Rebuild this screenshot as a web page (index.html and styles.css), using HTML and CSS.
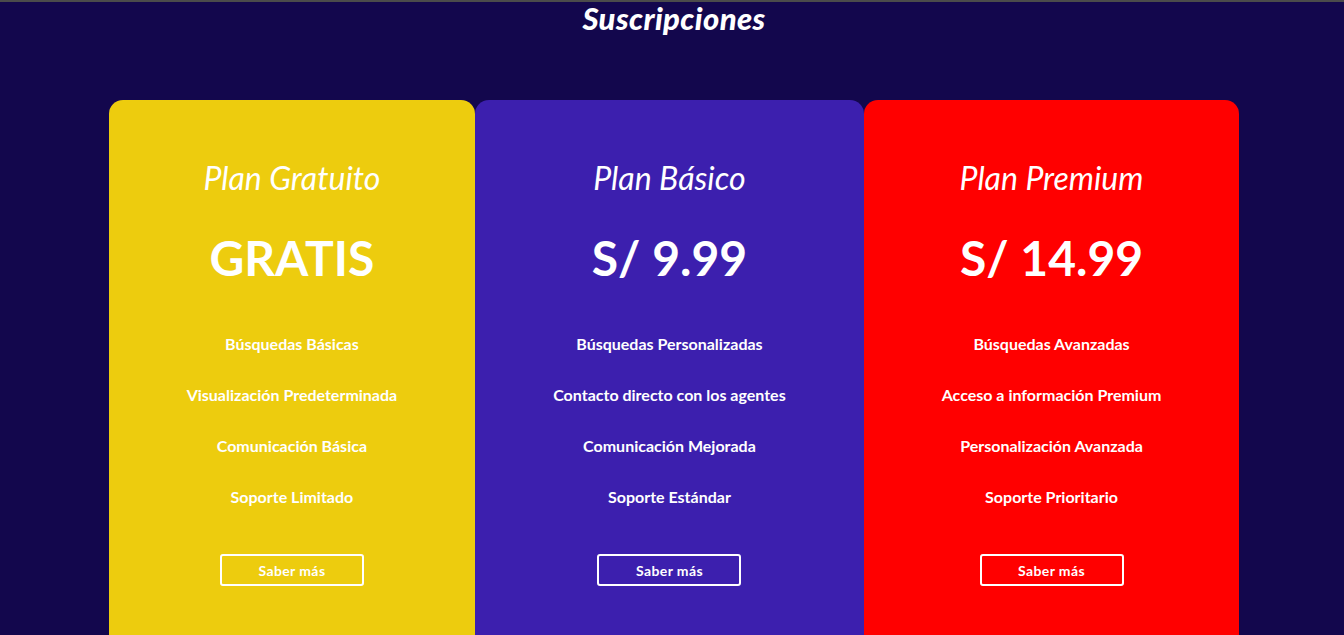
FILE: index.html
```html
<!DOCTYPE html>
<html lang="es">
<head>
<meta charset="utf-8">
<title>Suscripciones</title>
<link rel="stylesheet" href="styles.css">
</head>
<body>
<section class="subs">
  <h1 class="subs-title">Suscripciones</h1>
  <div class="plans">
    <article class="plan plan-free">
      <h2 class="plan-name">Plan Gratuito</h2>
      <p class="plan-price">GRATIS</p>
      <ul class="plan-features">
        <li>Búsquedas Básicas</li>
        <li>Visualización Predeterminada</li>
        <li>Comunicación Básica</li>
        <li>Soporte Limitado</li>
      </ul>
      <a class="plan-btn" href="#">Saber más</a>
    </article>
    <article class="plan plan-basic">
      <h2 class="plan-name">Plan Básico</h2>
      <p class="plan-price">S/ 9.99</p>
      <ul class="plan-features">
        <li>Búsquedas Personalizadas</li>
        <li>Contacto directo con los agentes</li>
        <li>Comunicación Mejorada</li>
        <li>Soporte Estándar</li>
      </ul>
      <a class="plan-btn" href="#">Saber más</a>
    </article>
    <article class="plan plan-premium">
      <h2 class="plan-name">Plan Premium</h2>
      <p class="plan-price">S/ 14.99</p>
      <ul class="plan-features">
        <li>Búsquedas Avanzadas</li>
        <li>Acceso a información Premium</li>
        <li>Personalización Avanzada</li>
        <li>Soporte Prioritario</li>
      </ul>
      <a class="plan-btn" href="#">Saber más</a>
    </article>
  </div>
</section>
</body>
</html>
```
FILE: styles.css
```css
* { box-sizing: border-box; }
html, body { margin: 0; padding: 0; }
body {
  background: #13074d;
  font-family: Lato, "Open Sans", sans-serif;
  color: #fff;
  border-top: 2px solid #4b4b4b;
  height: 635px;
  overflow: hidden;
}
.subs { display: flex; flex-direction: column; align-items: center; }
.subs-title {
  margin: 0;
  font-size: 31px;
  line-height: 32px;
  font-weight: 900;
  font-style: italic;
  letter-spacing: 0.4px;
  padding-left: 4px;
}
.plans {
  display: flex;
  justify-content: center;
  margin-top: 66px;
  margin-left: 4px;
}
.plan {
  display: flex;
  flex-direction: column;
  align-items: center;
  padding: 58px 78px 60px;
  border-radius: 14px;
  min-height: 600px;
  text-align: center;
}
.plan-free { background: #edcc0e; }
.plan-basic { background: #3c1fae; }
.plan-premium { background: #ff0000; }
.plan-name {
  margin: 0;
  font-size: 32px;
  line-height: 40px;
  font-weight: 400;
  font-style: italic;
  white-space: nowrap;
}
.plan-price {
  margin: 30px 0 0;
  font-size: 48px;
  line-height: 60px;
  font-weight: 700;
  white-space: nowrap;
}
.plan-features {
  list-style: none;
  margin: 46px 0 0;
  padding: 0;
}
.plan-features li {
  font-size: 16px;
  line-height: 20px;
  font-weight: 700;
  white-space: nowrap;
  margin-bottom: 31px;
}
.plan-features li:last-child { margin-bottom: 0; }
.plan-btn {
  margin-top: 47px;
  width: 144px;
  height: 32px;
  border: 2px solid #fff;
  border-radius: 3px;
  color: #fff;
  text-decoration: none;
  font-size: 14px;
  font-weight: 700;
  letter-spacing: 0.4px;
  display: flex;
  align-items: center;
  justify-content: center;
}
```
